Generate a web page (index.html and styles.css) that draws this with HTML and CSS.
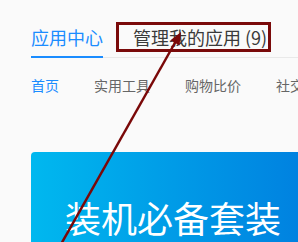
FILE: index.html
```html
<!DOCTYPE html>
<html lang="zh-CN">
<head>
<meta charset="utf-8">
<title>应用中心</title>
<link rel="stylesheet" href="styles.css">
</head>
<body>
<div class="page">
  <div class="tabs">
    <div class="tab tab-active">应用中心</div>
    <div class="tab tab-mark">管理我的应用 (9)</div>
  </div>
  <nav class="nav">
    <span class="nav-item nav-active">首页</span>
    <span class="nav-item">实用工具</span>
    <span class="nav-item">购物比价</span>
    <span class="nav-item">社交通讯</span>
  </nav>
  <div class="banner">
    <div class="banner-title">装机必备套装</div>
  </div>
  <svg class="arrow" width="298" height="242" viewBox="0 0 298 242">
    <line x1="60" y1="246" x2="176" y2="41" stroke="#7a0808" stroke-width="2.5"/>
    <polygon points="181,32 179.5,45.5 170.5,40.3" fill="#7a0808"/>
  </svg>
</div>
</body>
</html>
```

FILE: styles.css
```css
html, body {
  margin: 0;
  padding: 0;
  background: #fafafa;
  overflow: hidden;
}
.page {
  position: relative;
  width: 298px;
  height: 242px;
  overflow: hidden;
  padding-left: 31px;
  box-sizing: border-box;
  font-family: "Noto Sans CJK SC", "Noto Sans", sans-serif;
}
.tabs {
  display: flex;
  align-items: flex-start;
  gap: 13px;
  padding-top: 22px;
  border-bottom: 1px solid #e9e9e9;
}
.tab {
  font-size: 18px;
  line-height: 24px;
  white-space: nowrap;
}
.tab-active {
  color: #1a8cff;
  padding: 3px 0 7px;
  border-bottom: 2px solid #1a8cff;
  margin-bottom: -1px;
}
.tab-mark {
  color: #3a3a3a;
  border: 3px solid #7a0a0a;
  padding: 0 1px 0 14px;
}
.nav {
  display: flex;
  gap: 35px;
  padding-top: 17px;
  font-size: 14px;
  line-height: 20px;
  white-space: nowrap;
}
.nav-item {
  color: #666;
}
.nav-active {
  color: #1a8cff;
}
.banner {
  margin-top: 57px;
  height: 120px;
  border-radius: 4px 0 0 0;
  background: linear-gradient(90deg, #00b8ef 0%, #0082e0 100%);
  padding: 44px 0 0 34px;
  box-sizing: border-box;
}
.banner-title {
  color: #fff;
  font-size: 36px;
  line-height: 43px;
  white-space: nowrap;
}
.arrow {
  position: absolute;
  left: 0;
  top: 0;
}
```
